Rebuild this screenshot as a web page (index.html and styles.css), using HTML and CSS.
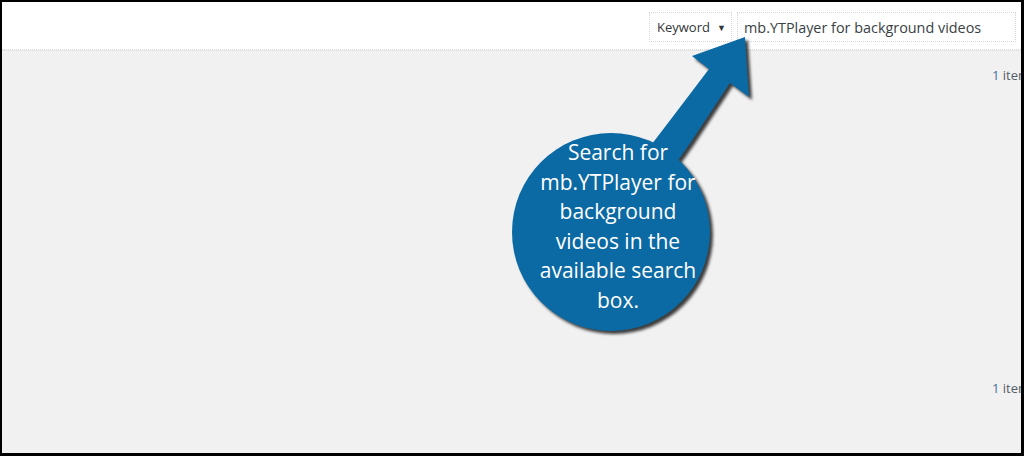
FILE: index.html
```html
<!DOCTYPE html>
<html>
<head>
<meta charset="utf-8">
<link rel="stylesheet" href="styles.css">
</head>
<body>
<div class="frame">
  <div class="page">
    <header class="topbar">
      <div class="search-form">
        <div class="select"><span>Keyword</span><span class="caret">▼</span></div>
        <div class="input">mb.YTPlayer for background videos</div>
      </div>
    </header>
    <main class="content">
      <div class="tablenav"><span class="count"><span class="num">1</span> item</span></div>
      <div class="list"></div>
      <div class="tablenav"><span class="count"><span class="num">1</span> item</span></div>
    </main>
    <div class="callout">
      <svg class="callout-shape" viewBox="500 30 280 330" width="280" height="330">
        <polygon points="645,153 668,123 709,69 692,56 745,37 749,97 730,83 691,142 670,172" fill="#0b69a3"/>
        <circle cx="611" cy="232" r="99" fill="#0b69a3"/>
      </svg>
      <div class="callout-text">Search for<br>mb.YTPlayer for<br>background<br>videos in the<br>available search<br>box.</div>
    </div>
  </div>
</div>
</body>
</html>
```
FILE: styles.css
```css
html, body {
  margin: 0;
  padding: 0;
  background: #000;
}
.frame {
  width: 1024px;
  height: 456px;
  box-sizing: border-box;
  padding: 2px 3px 3px 2px;
  background: #000;
}
.page {
  position: relative;
  width: 1019px;
  height: 451px;
  overflow: hidden;
  background: #f1f1f1;
  display: flex;
  flex-direction: column;
  font-family: "Open Sans", "Noto Sans", sans-serif;
}
.topbar {
  height: 48px;
  background: #fff;
  border-bottom: 1px dotted #d8d8d8;
  box-shadow: 0 1px 0 #e6e6e6;
  display: flex;
  justify-content: flex-end;
  align-items: flex-start;
  padding: 10px 5px 0 0;
  box-sizing: border-box;
}
.search-form {
  display: flex;
  gap: 5px;
}
.select {
  width: 83px;
  height: 30px;
  box-sizing: border-box;
  border: 1px dotted #d6d6d6;
  display: flex;
  align-items: center;
  padding-left: 7px;
  gap: 7px;
  font-size: 13px;
  color: #32373c;
}
.caret {
  font-size: 9px;
  color: #32373c;
}
.input {
  width: 279px;
  height: 30px;
  box-sizing: border-box;
  border: 1px dotted #d6d6d6;
  display: flex;
  align-items: center;
  padding-left: 6px;
  font-size: 14.4px;
  color: #3a3f44;
  white-space: nowrap;
}
.content {
  flex: 1;
  display: flex;
  flex-direction: column;
}
.tablenav {
  display: flex;
  justify-content: flex-end;
  height: 28px;
  align-items: center;
}
.content > .tablenav:first-child {
  margin-top: 11px;
}
.list {
  flex: 1;
}
.content > .tablenav:last-child {
  margin-bottom: 51px;
}
.count {
  font-size: 13px;
  color: #555d66;
  white-space: nowrap;
  margin-right: -9px;
}
.num {
  color: #3f72a4;
}
.callout {
  position: absolute;
  left: 498px;
  top: 28px;
  width: 280px;
  height: 330px;
}
.callout-shape {
  display: block;
  filter: drop-shadow(3px 3px 1.5px rgba(0, 0, 0, 0.75));
}
.callout-text {
  position: absolute;
  left: 18px;
  top: 108px;
  width: 200px;
  text-align: center;
  color: #fff;
  font-family: "Open Sans", "Noto Sans", sans-serif;
  font-size: 21px;
  line-height: 29.5px;
}
```
